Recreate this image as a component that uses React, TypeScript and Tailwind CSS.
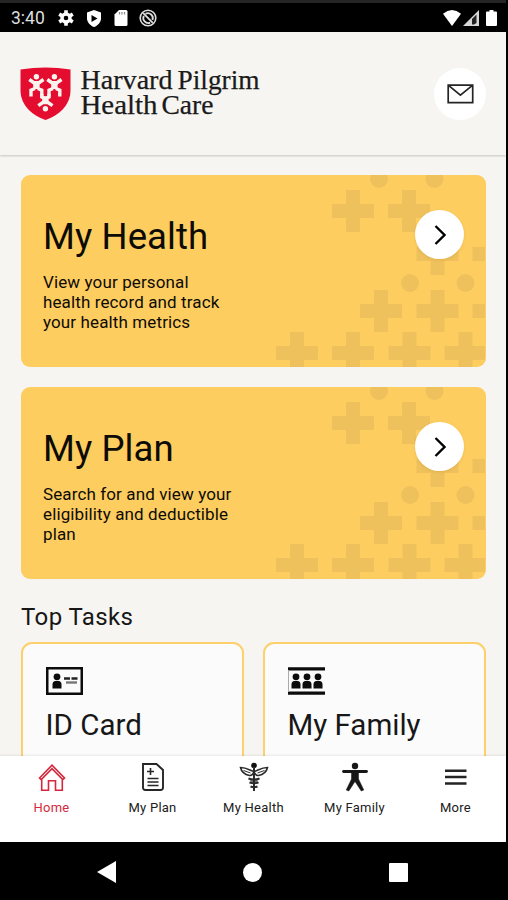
import type { ReactNode } from 'react'

const StatusBar = () => (
  <header className="flex h-8 shrink-0 items-end border-t-[3px] border-[#252525] bg-black text-white">
    <div className="flex h-full w-full items-center justify-between pl-[11px] pr-[9px] pt-[1px]">
      <div className="flex items-center">
        <span className="w-[47px] pt-[2px] text-[17.5px] leading-none text-[#dedede]">3:40</span>
        <svg className="h-4 w-4" viewBox="0 0 16 16" fill="none" stroke="currentColor">
          <circle cx="8" cy="8" r="4" strokeWidth="3.4" />
          <path d="M8 .2v3M8 12.8v3M1.2 4.1l2.6 1.5M12.2 10.4l2.6 1.5M1.2 11.9l2.6-1.5M12.2 5.6l2.6-1.5" strokeWidth="3.6" />
        </svg>
        <svg className="ml-3 h-[17px] w-4" viewBox="0 0 16 17">
          <path d="M8 0l7 2.5v5.7c0 4-2.8 7.2-7 8.8-4.2-1.6-7-4.8-7-8.8V2.5z" fill="currentColor" />
          <path d="M5.500 5l6 3.500-6 3.500z" fill="#000" />
        </svg>
        <svg className="ml-3 h-4 w-[14px]" viewBox="0 0 14 16">
          <path d="M5 0h7q1.500 0 1.500 1.500v13q0 1.500-1.500 1.500H2Q.500 16 .500 14.500V4.500z" fill="currentColor" />
          <path d="M5.500 2v2.500M8 2v2.500M10.500 2v2.500" stroke="#888" strokeWidth="1.200" />
        </svg>
        <svg className="ml-[11px] h-[18px] w-[18px] text-[#dedede]" viewBox="0 0 18 18" fill="none" stroke="currentColor">
          <circle cx="9" cy="9" r="7.800" strokeWidth="1.600" />
          <path d="M4.200 4.200l9.600 9.600M6.500 4.800a5 5 0 0 1 7 6.200" strokeWidth="1.800" />
          <path d="M4.800 6.800a5 5 0 0 0 6.400 6.800" strokeWidth="1.800" />
        </svg>
      </div>
      <div className="flex items-center">
        <svg className="h-4 w-[18px]" viewBox="0 0 18 16" fill="currentColor">
          <path d="M0 3.700Q9-3.700 18 3.700L9 16z" />
        </svg>
        <svg className="ml-[2px] h-4 w-4" viewBox="0 0 16 16">
          <path d="M0 16L16 0v16z" fill="#d8d8d8" />
          <path d="M9 9l4.500-4.500V13L11 14.500H9z" fill="#222" />
        </svg>
        <svg className="ml-[7px] h-4 w-[11px]" viewBox="0 0 11 16" fill="currentColor">
          <path d="M3.500 0h4v1.500H10q1 0 1 1V15q0 1-1 1H1q-1 0-1-1V2.500q0-1 1-1h2.500z" />
        </svg>
      </div>
    </div>
  </header>
)

const ShieldFigure = ({ transform }: { transform?: string }) => (
  <g transform={transform}>
    <circle cx="16.400" cy="9.700" r="2.700" fill="#fbf4ee" />
    <path d="M13.200 14.500h6.400v7.500h-6.400z" fill="#fbf4ee" />
    <path d="M9.300 12.500l4.500 3.200h5.200l4.500-3.200M11 29.500v-6.300l4-1.700M21.800 29.500v-6.300l-4-1.700" fill="none" stroke="#fbf4ee" strokeWidth="3.400" />
  </g>
)

const Shield = () => (
  <svg className="h-[53px] w-[51px]" viewBox="0 0 51 53">
    <path d="M.500 2.500Q25.500-1.500 50.500 2.500V23C50.500 38 39 48.500 25.500 53 12 48.500.500 38 .500 23z" fill="#e40d2f" />
    <ShieldFigure />
    <ShieldFigure transform="matrix(-1 0 0 1 50.8 0)" />
    <circle cx="25.400" cy="41.700" r="2.700" fill="#fbf4ee" />
    <path d="M22.200 30h6.400v7h-6.400z" fill="#fbf4ee" />
    <path d="M18.300 38.700l4.500-3.200h5.200l4.500 3.200M21.800 27v3l3.600 1.200 3.600-1.200v-3" fill="none" stroke="#fbf4ee" strokeWidth="3.400" />
  </svg>
)

const Wordmark = () => (
  <svg className="ml-[9px] h-[60px] w-[184px]" viewBox="0 -3 184 60" fill="#1b1b1b" stroke="#1b1b1b" strokeWidth=".25" fontFamily="Liberation Serif, serif" fontSize="27.5">
    <text x=".5" y="22.300" textLength="92" lengthAdjust="spacingAndGlyphs">Harvard</text>
    <text x="97.500" y="22.300" textLength="82" lengthAdjust="spacingAndGlyphs">Pilgrim</text>
    <text x=".5" y="47.300" textLength="77" lengthAdjust="spacingAndGlyphs">Health</text>
    <text x="81.500" y="47.300" textLength="52" lengthAdjust="spacingAndGlyphs">Care</text>
  </svg>
)

const Header = () => (
  <div className="relative z-10 flex h-[123px] shrink-0 items-center justify-between bg-[#f6f5f1] px-5 shadow-[0_1px_2px_rgba(0,0,0,0.2)]">
    <div className="flex items-center">
      <Shield />
      <Wordmark />
    </div>
    <button aria-label="Messages" className="flex size-[52px] items-center justify-center rounded-full bg-white">
      <svg className="h-5 w-[27px]" viewBox="0 0 27 20" fill="none" stroke="#242424" strokeWidth="1.700">
        <path d="M1.200 1.200h24.500v17.500H1.200zM1.200 1.200l12.200 10L25.700 1.200" />
      </svg>
    </button>
  </div>
)

// centre points, in card pixels
const crosses = [
  [332, 36], [388, 36], [416.5, 79], [472.5, 79], [360, 136], [416.5, 136],
  [472.5, 136], [276, 178], [332, 178], [388.5, 178], [444.5, 178],
]

const dots = [[358, 4], [413.5, 4], [389, 108], [444.5, 108]]

const Pattern = () => (
  <svg className="absolute inset-y-0 left-0 h-full w-[464px]" viewBox="0 0 464 192" fill="#efc15c">
    {crosses.map(([x, y]) => (
      <path key={`${x}-${y}`} d={`M${x - 7} ${y - 21}h14v14h14v14h-14v14h-14v-14h-14v-14h14z`} />
    ))}
    {dots.map(([x, y]) => (
      <circle key={`${x}-${y}`} cx={x} cy={y} r="9" />
    ))}
  </svg>
)

interface FeatureCardProps {
  title: string
  lines: string[]
}

const FeatureCard = ({ title, lines }: FeatureCardProps) => (
  <section className="relative flex h-[192px] shrink-0 overflow-hidden rounded-[9px] bg-[#fecd60]">
    <Pattern />
    <div className="relative flex w-full items-start justify-between px-[22px]">
      <div>
        <h2 className="mt-10 text-[36.5px] leading-[44px] tracking-[0.1px]">{title}</h2>
        <p className="mt-[13px] whitespace-nowrap text-[17px] leading-[20px] tracking-[0.12px]">
          {lines.map((line) => (
            <span key={line} className="block">{line}</span>
          ))}
        </p>
      </div>
      <button aria-label={title} className="mt-[35px] flex size-[49px] items-center justify-center rounded-full bg-white shadow-[0_1px_3px_rgba(160,120,30,0.2)]">
        <svg className="h-5 w-3" viewBox="0 0 12 20" fill="none" stroke="#000" strokeWidth="2.300">
          <path d="M1.500 1l9 9-9 9" />
        </svg>
      </button>
    </div>
  </section>
)

const Person = ({ x }: { x: number }) => (
  <g fill="#0c0c0c" transform={`translate(${x} 6)`}>
    <circle cx="5" cy="3.800" r="3.400" />
    <path d="M.500 15.500v-4Q.500 8 3.500 8h3q3 0 3 3.500v4z" />
  </g>
)

const TaskCard = ({ title, icon }: { title: string; icon: ReactNode }) => (
  <div className="h-[150px] flex-1 rounded-[11px] border-[2.5px] border-[#fdd06b] bg-[#fbfbfb] pl-[22.5px] pt-[23px]">
    {icon}
    <h3 className="mt-[13px] text-[29.5px] leading-[35px] text-[#171717]">{title}</h3>
  </div>
)

const IdIcon = () => (
  <svg className="h-[28px] w-[37px]" viewBox="0 0 37 28">
    <path d="M1.250 1.250h34.500v25.500H1.250z" fill="none" stroke="#0c0c0c" strokeWidth="2.500" />
    <Person x={6} />
    <path d="M18 11.500h6M25.500 11.500h6" stroke="#222" strokeWidth="2.400" />
    <path d="M20 15.500h11" stroke="#777" strokeWidth="2.400" />
  </svg>
)

const FamilyIcon = () => (
  <svg className="h-[28px] w-[37px]" viewBox="0 0 37 28">
    <path d="M0 1.800h37M0 26.200h37" stroke="#0c0c0c" strokeWidth="3.300" />
    <path d="M.500 3v22" stroke="#aaa" />
    <Person x={3} />
    <Person x={14} />
    <Person x={25} />
  </svg>
)

const HomeIcon = () => (
  <svg className="h-8 w-8" viewBox="0 0 32 32" fill="none" stroke="#d5283d" strokeWidth="1.600">
    <path d="M3.500 17L16 4.200 28.500 17l-1.700 1.600L16 7.600 5.200 18.600zM5.700 18v11.300h6.800v-9.600h7v9.600h6.800V18" />
  </svg>
)

const PlanIcon = () => (
  <svg className="h-8 w-8" viewBox="0 0 32 32" fill="none" stroke="#262626" strokeWidth="1.600">
    <path d="M6 3h13.500l6.500 6v17.500q0 2.500-2.500 2.500h-15Q6 29 6 26.500z" strokeWidth="1.900" />
    <path d="M13.500 7v7M10 10.500h7M10.500 17.500h11M10.500 21h11M10.500 24.500h11" />
  </svg>
)

const HealthIcon = () => (
  <svg className="h-8 w-8" viewBox="0 0 32 32" fill="none" stroke="#2b2b2b" strokeWidth="1.600">
    <circle cx="16" cy="4.500" r="2.800" fill="#111" stroke="none" />
    <path d="M16 6v24" strokeWidth="2" />
    <path d="M16 10.500C12 9.500 9 6.500 2.500 6.500c1 4.500 4 7 9 8 2 .300 3.500-1 4.500-4zM16 10.500c4-1 7-4 13.500-4-1 4.500-4 7-9 8-2 .300-3.500-1-4.500-4z" />
    <path d="M5.500 9.500l7 2.500M26.500 9.500l-7 2.500" strokeWidth="1" />
    <path d="M10.500 17.500q5.500 2 11 0M11.500 21.500q4.500 1.500 9 0M12.500 25.500q3.500 1.500 7 0" strokeWidth="2" />
    <path d="M11 17.500c0 3 9 2 9 4M21 17.500c0 3-9 2-9 4" strokeWidth=".8" />
  </svg>
)

const BodyIcon = () => (
  <svg className="h-8 w-8" viewBox="0 0 32 32" fill="#171717" stroke="#171717">
    <circle cx="16" cy="5" r="3.200" stroke="none" />
    <path d="M4.500 10.500h23" strokeWidth="2.800" strokeLinecap="round" />
    <path d="M12.500 10.500h7v7.500L24.800 29l-2.600 1L16 20.500 9.800 30l-2.600-1L12.500 18z" strokeWidth=".5" />
  </svg>
)

const MoreIcon = () => (
  <svg className="h-8 w-8" viewBox="0 0 32 32" stroke="#242424" strokeWidth="2.500">
    <path d="M5 9.700h21.500M5 16.100h21.500M5 22.500h21.500" />
  </svg>
)

const tabs = [
  { label: 'Home', icon: <HomeIcon /> },
  { label: 'My Plan', icon: <PlanIcon /> },
  { label: 'My Health', icon: <HealthIcon /> },
  { label: 'My Family', icon: <BodyIcon /> },
  { label: 'More', icon: <MoreIcon /> },
]

const TabBar = () => (
  <nav className="flex h-[86px] shrink-0 bg-white pl-[1px] pt-[5px] shadow-[0_-1px_2px_rgba(0,0,0,0.08)]">
    {tabs.map((tab, index) => (
      <button
        key={tab.label}
        className={`flex flex-1 flex-col items-center text-[13px] leading-[16px] tracking-[0.25px] ${index === 0 ? 'text-[#d5283d]' : 'text-[#202020]'}`}
      >
        {tab.icon}
        <span className="mt-[7px] whitespace-nowrap">{tab.label}</span>
      </button>
    ))}
  </nav>
)

const SystemBar = () => (
  <footer className="flex h-[58px] shrink-0 items-center justify-between bg-black pl-[97px] pr-[98px] pt-[2px]">
    <svg className="h-[22px] w-[19px]" viewBox="0 0 19 22" fill="#fff">
      <path d="M0 11L19 0v22z" />
    </svg>
    <div className="size-[19px] rounded-full bg-white" />
    <div className="size-[19px] rounded-[1px] bg-white" />
  </footer>
)

export default function App() {
  return (
    <div className="h-[900px] w-[508px] overflow-hidden bg-black font-['Roboto',sans-serif] text-[#0d0b06]">
      <div className="flex h-full w-[506px] flex-col">
        <StatusBar />
        <Header />
        <main className="flex min-h-0 flex-1 flex-col gap-5 overflow-hidden bg-[#f6f5f1] pl-[21px] pr-5 pt-5">
          <FeatureCard
            title="My Health"
            lines={['View your personal', 'health record and track', 'your health metrics']}
          />
          <FeatureCard
            title="My Plan"
            lines={['Search for and view your', 'eligibility and deductible', 'plan']}
          />
          <section>
            <h2 className="mt-[2px] text-[24px] leading-[32px] tracking-[0.4px] text-[#171717]">Top Tasks</h2>
            <div className="mt-[9px] flex gap-[19px]">
              <TaskCard title="ID Card" icon={<IdIcon />} />
              <TaskCard title="My Family" icon={<FamilyIcon />} />
            </div>
          </section>
        </main>
        <TabBar />
        <SystemBar />
      </div>
    </div>
  )
}
